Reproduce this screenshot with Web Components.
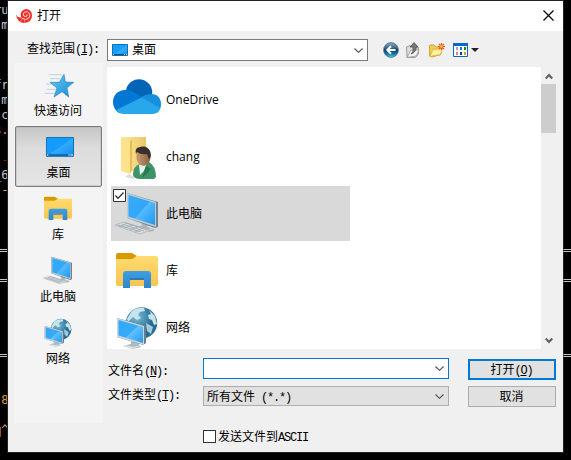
<!DOCTYPE html>
<html lang="zh-CN">
<head>
<meta charset="utf-8">
<title>打开</title>
<style>
html,body{margin:0;width:571px;height:460px;overflow:hidden;background:#000}
</style>
</head>
<body>
<desktop-scene></desktop-scene>
<script>
const UI = '"Open Sans","Noto Sans CJK SC",sans-serif';
const ICONS = {
cloud:`<svg viewBox="0 0 48 48"><path d="M13 15A13 13 0 0 1 39 20L28 25Z" fill="#0364b8"/><path d="M12 15C5 15 0 20 0 27C0 32 3 36 6 38L29 22L20 16.500Q16 14 12 15Z" fill="#0078d4"/><path d="M39 19Q33 19 28 22L44 38Q48 35 48 29C48 23 44 19 39 19Z" fill="#1490df"/><path d="M3 35L28.500 22.500L47 33Q45 39 39 39H11Q6 39 3 35Z" fill="#28a8ea"/></svg>`,
user:`<svg viewBox="0 0 48 48"><defs><linearGradient id="f"><stop stop-color="#ffe9a0"/><stop offset="1" stop-color="#edc765"/></linearGradient><linearGradient id="h"><stop stop-color="#c99c70"/><stop offset="1" stop-color="#87603f"/></linearGradient></defs><path d="M8 5H33V39H14Z" fill="url(#f)"/><path d="M8 5L17 10V42L8 39Z" fill="#ffe28b"/><path d="M17 10V42L19 38V7Z" fill="#e7bd58"/><path d="M16 42L21 45V47L12 45Z" fill="#ddd"/><path d="M20 43Q20 34 27 32L36 30Q43 34 43 45L41 47H27Q21 47 20 43Z" fill="#3d9466"/><path d="M26 33L34 31L31 39L27 43Z" fill="#e3f1ed"/><path d="M33 34L29 46L38 37Z" fill="#277650"/><ellipse cx="30.500" cy="24" rx="7.200" ry="10" fill="url(#h)"/><path d="M23 22Q21 16 27 15Q34 14 37 19Q39 24 36 27L34 22Q28 23 24 20Z" fill="#36302e"/></svg>`,
pc:`<svg viewBox="0 0 48 48"><defs><linearGradient id="p" x2="1" y2="1"><stop stop-color="#38acfa"/><stop offset=".5" stop-color="#32a6f8"/><stop offset=".52" stop-color="#55baff"/><stop offset="1" stop-color="#2097ed"/></linearGradient></defs><path d="M28 32L36 34L34 38L41 40V42L34 43L21 40V38L29 37Z" fill="#a9b4bd"/><path d="M22 38L35 40L41 39L34 43L21 40Z" fill="#d6dce0"/><path d="M14 4L45 13V38L42 39L14 29Z" fill="#71818e"/><path d="M14 4L43 13V38L14 29Z" fill="#bdcbd3"/><path d="M15.500 6L42 14V36L15.500 27.500Z" fill="url(#p)"/><path d="M2 36L11 33L37 41L27 45Z" fill="#dce1e4" stroke="#9ca6ad" stroke-width=".6"/><path d="M5 36L28 43M9 35L31 42M13 34L34 41M6 38L14 34M11 39L20 36M17 41L25 38M22 43L30 39" stroke="#a4afb6" stroke-width="1"/></svg>`,
library:`<svg viewBox="0 0 48 48"><defs><linearGradient id="l" x2="0" y2="1"><stop stop-color="#ffdb70"/><stop offset="1" stop-color="#f8c550"/></linearGradient><linearGradient id="b" x2="0" y2="1"><stop stop-color="#3f9ee5"/><stop offset="1" stop-color="#2f86ca"/></linearGradient></defs><path d="M3 9Q3 7 5 7H19L24 10L20 14H3Z" fill="#d99a00"/><path d="M3 13H19L24 10H43Q45 10 45 12V38Q45 40 43 40H5Q3 40 3 38Z" fill="url(#l)"/><path d="M10 42V28Q10 25 13 25H35Q38 25 38 28V42H31V32H17V42Z" fill="url(#b)"/><path d="M17 32H31V34H17Z" fill="#3279b2"/></svg>`,
network:`<svg viewBox="0 0 48 48"><defs><radialGradient id="g" cx=".35" cy=".3"><stop stop-color="#76bedb"/><stop offset="1" stop-color="#286d91"/></radialGradient><linearGradient id="n" x2="1" y2="1"><stop stop-color="#30a8fb"/><stop offset=".52" stop-color="#37aaf9"/><stop offset=".54" stop-color="#62c0ff"/><stop offset="1" stop-color="#239aef"/></linearGradient></defs><circle cx="28.500" cy="20" r="15.700" fill="url(#g)"/><path d="M19 8Q24 4 31 5L32 8L27 9L25 12L28 15L24 17L20 14L15 19L14 16Z" fill="#c5e4ec"/><path d="M36 7L42 13L44 21L41 22L39 17L36 16L35 12L38 11Z" fill="#c5e4ec"/><path d="M33 20L40 24L38 31L34 28Z" fill="#a1cddd"/><path d="M18 37L26 40V42L28 44L20 46L10 43L18 41Z" fill="#aeb9c0"/><path d="M12 42L20 44L28 42L20 46L10 43Z" fill="#dce1e3"/><path d="M4 15L33 23V40L30 42L4 34Z" fill="#687d8b"/><path d="M4 15L31 23V42L4 34Z" fill="#cbd6dc"/><path d="M5.500 17L30 24V40L5.500 32.500Z" fill="url(#n)"/></svg>`,
star:`<svg viewBox="0 0 48 48"><defs><linearGradient id="s" x2="1" y2="1"><stop stop-color="#65cafc"/><stop offset="1" stop-color="#168bd0"/></linearGradient></defs><path d="M10 10H29M12 16H27M6 24H19M7 32H21M4 38H19" stroke="#a9cbe0" stroke-width="1.200"/><path d="M33 9.500L35 21L47.500 21.500L37.500 29.500L40 43.500L30 35.500L18 43.500L22.500 30L12 21.500H26Z" fill="url(#s)" stroke="#2486bd"/></svg>`,
desktop:`<svg viewBox="0 0 48 48"><defs><linearGradient id="d" x2="1" y2="1"><stop stop-color="#159bfb"/><stop offset=".5" stop-color="#159bfb"/><stop offset=".51" stop-color="#31aaff"/><stop offset="1" stop-color="#128fed"/></linearGradient></defs><path d="M5.200 11.200H45.800V39.500H5.200Z" fill="url(#d)" stroke="#1173b4" stroke-width="1.500"/><path d="M6 37.500H45" stroke="#095692" stroke-width="2"/><path d="M6 37.500H8M38 37.500H40M41 37.500H45" stroke="#fff" stroke-width="1.500"/></svg>`,
minidesk:`<svg viewBox="0 0 16 12"><defs><linearGradient id="m" x2="1" y2="1"><stop offset=".5" stop-color="#179dfb"/><stop offset=".52" stop-color="#38adff"/><stop offset="1" stop-color="#128fed"/></linearGradient></defs><path d="M.5.500H15.500V11.500H.5Z" fill="url(#m)" stroke="#1270ad"/><path d="M1 10.500H15" stroke="#07518b"/><path d="M1 10.500H2M12 10.500H13M14 10.500H15" stroke="#fff"/></svg>`,
shell:`<svg viewBox="0 0 16 14"><path d="M0 5Q1 8.500 5 8.500L16 6Q16 13.500 8.500 14Q1 14 0 5Z" fill="#ed3029"/><circle cx="10.300" cy="5.700" r="5.600" fill="#ed3029"/><path d="M5.500 9.200Q10 12 13 8.800Q15 4.500 11.500 2.800Q8 2 7.200 5Q7.200 7.800 9.800 7.600Q12 7 10.900 5.300" fill="none" stroke="#fff" stroke-width=".8"/><path d="M6 10L4.500 13M8.500 11V14M11.500 10.500L13 12.500" fill="none" stroke="#ff9e99" stroke-width=".6"/></svg>`,
close:`<svg viewBox="0 0 11 11"><path d="M.5.500L10.500 10.500M10.500.5L.5 10.500" stroke="#000" stroke-width="1.150"/></svg>`,
chevron:`<svg viewBox="0 0 9 5"><path d="M.5.500L4.500 4.300L8.500.5" fill="none" stroke="#505050" stroke-width="1.100"/></svg>`,
up:`<svg viewBox="0 0 8 7"><path d="M.7 5.500L4 2L7.300 5.500" fill="none" stroke="#606060" stroke-width="2.200"/></svg>`,
down:`<svg viewBox="0 0 8 7"><path d="M.7 1.500L4 5L7.300 1.500" fill="none" stroke="#606060" stroke-width="2.200"/></svg>`,
back:`<svg viewBox="0 0 16 16"><defs><linearGradient id="k" x2="0" y2="1"><stop stop-color="#8fa8bd"/><stop offset=".35" stop-color="#40698f"/><stop offset=".5" stop-color="#113a66"/><stop offset=".8" stop-color="#1682b5"/><stop offset="1" stop-color="#52dce9"/></linearGradient></defs><circle cx="8" cy="8" r="7.400" fill="url(#k)" stroke="#496f8f" stroke-width=".8"/><path d="M12.500 8H4.500M8 4.300L4.300 8L8 11.700" fill="none" stroke="#fff" stroke-width="2"/></svg>`,
parent:`<svg viewBox="0 0 16 16"><path d="M.5 5L4 3.500L5 4.500H8L11 6L12.500 5.500V12L9.500 15.500H1Z" fill="#ddd" stroke="#9b9b9b"/><path d="M1 15.500L5 8H13L10 14Z" fill="#f4f4f4" stroke="#999" stroke-width=".8"/><path d="M5 12Q8 10 7 5H4L8 .5L12 5H10Q10.500 10 5 12Z" fill="#777" stroke="#4c4c4c" stroke-width=".8"/></svg>`,
newfolder:`<svg viewBox="0 0 16 16"><path d="M.5 4V14L3 15L12 12.500V5H7L5 3H1Z" fill="#f3ce54" stroke="#cfa23b"/><path d="M1 14.500L4 7.500L13.500 6.500L11.500 12.500Z" fill="#fff1a1" stroke="#daad3b" stroke-width=".8"/><path d="M12.500 1V8M9 4.500H16M10 2L15 7M15 2L10 7" stroke="#f05320" stroke-width="1.200"/><circle cx="12.500" cy="4.500" r="1.300" fill="#ffcf4c"/></svg>`,
view:`<svg viewBox="0 0 15 14"><path d="M.5.500H14.500V13.500H.5Z" fill="#fff" stroke="#0866cf"/><path d="M0 0H15V3H0Z" fill="#0866cf"/><path d="M3 4H5V7H3Z" fill="#ad98d8"/><path d="M7 4H9V7H7Z" fill="#167be5"/><path d="M11 4H13V7H11Z" fill="#168a29"/><path d="M3 9H5V12H3Z" fill="#f17f65"/><path d="M7 9H9V12H7Z" fill="#123a91"/><path d="M11 9H13V12H11Z" fill="#d49b1a"/></svg>`,
tri:`<svg viewBox="0 0 8 4"><path d="M0 0H8L4 4Z" fill="#222"/></svg>`,
check:`<svg viewBox="0 0 13 13"><path d="M.5.500H12.500V12.500H.5Z" fill="#fff" stroke="#333"/><path d="M2.500 6.500L5 9.300L10.500 3.500" fill="none" stroke="#222" stroke-width="1.200"/></svg>`
};
function define(name, html){
  customElements.define(name, class extends HTMLElement{
    connectedCallback(){
      if(this.shadowRoot) return;
      const t=document.createElement('template');
      t.innerHTML=typeof html==='function'?html(this):html;
      this.attachShadow({mode:'open'}).append(t.content.cloneNode(true));
    }
  });
}
define('shell-icon', e=>`<style>:host{display:block;flex:none;width:${e.getAttribute('w')}px;height:${e.getAttribute('h')||e.getAttribute('w')}px}svg{display:block;width:100%;height:100%}</style>${ICONS[e.getAttribute('name')]}`);

/* Fixed-pitch latin beside full-width hanzi, half a hanzi per letter. */
define('half-text', `<style>:host{font:12px/12px "Liberation Mono",monospace;letter-spacing:-1.2px;white-space:pre}</style><slot></slot>`);

define('terminal-strip', e=>{
  const rows=JSON.parse(e.getAttribute('rows'));
  let out='';
  for(let i=0;i<30;i++){const r=rows[i];out+=`<div style="${r&&r[1]?'color:'+r[1]:''}${r&&r[0][0]==='='?';letter-spacing:-1.6px':''}">${r?r[0]:''}</div>`}
  return `<style>:host{display:flex;flex-direction:column;flex:none;width:8px;padding-top:3px;box-sizing:border-box;height:460px;overflow:hidden;font:12px/15px "DejaVu Sans Mono",monospace;letter-spacing:-.4px;color:#c4c4c4}div{height:15px;flex:none;display:flex;justify-content:${e.getAttribute('side')};white-space:pre}</style>${out}`;
});

define('title-bar', `<style>:host{display:flex;align-items:center;height:30px;background:#fff;padding:0 9px 0 8px;font:12px/16px ${UI}}span{flex:1;padding-left:5px}.x{position:relative;top:-1px}</style><shell-icon name="shell" w="16" h="14"></shell-icon><span><slot></slot></span><shell-icon class="x" name="close" w="11"></shell-icon>`);

define('drop-box', `<style>:host{display:flex;align-items:center;box-sizing:border-box;height:22px;border:1px solid #7a7a7a;background:#fff;padding:0 4px;font:12px/16px ${UI}}.v{flex:1;display:flex;align-items:center;gap:4px;white-space:pre}
:host([focused]){border-color:#0078d7;height:21px}:host([flat]){background:#e1e1e1;border-color:#adadad;height:20px;padding-left:3px}</style><div class="v"><slot></slot></div><shell-icon name="chevron" w="9" h="5"></shell-icon>`);

define('look-in', `<style>:host{display:flex;height:32px;box-sizing:border-box;padding:8px 0 0 19px}label{width:80px;font:12px/18px "Noto Sans CJK SC",sans-serif;white-space:nowrap}drop-box{width:261px}.t{display:flex;align-items:center;height:22px;margin-left:15px;gap:7px}.view{display:flex;align-items:center;gap:3px;margin-left:1px}</style>
<label>查找范围<half-text>(<u>I</u>):</half-text></label><drop-box><shell-icon name="minidesk" w="16" h="12"></shell-icon>桌面</drop-box>
<div class="t"><shell-icon name="back" w="16"></shell-icon><shell-icon name="parent" w="16"></shell-icon><shell-icon name="newfolder" w="16"></shell-icon><div class="view"><shell-icon name="view" w="15" h="14"></shell-icon><shell-icon name="tri" w="8" h="4"></shell-icon></div></div>`);

define('place-item', e=>`<style>:host{display:flex;flex-direction:column;align-items:center;box-sizing:border-box;width:87px;height:61px;margin:0 1px 1px;padding:4px 1px 0 0;font:12px/16px ${UI}}
:host([selected]){background:linear-gradient(#c6c6c6,#dcdcdc 35%,#e5e5e5);border:1px solid #7c7c7c;box-shadow:inset 0 0 0 1px #a9a9a955;border-radius:2px;padding:3px 0 0}span{margin-top:3px}</style><shell-icon name="${e.getAttribute('icon')}" w="32"></shell-icon><span><slot></slot></span>`);

define('places-bar', `<style>:host{display:block;box-sizing:border-box;width:89px;height:360px;padding-top:1px;background:#f4f4f4;flex:none}</style>
<place-item icon="star">快速访问</place-item><place-item icon="desktop" selected>桌面</place-item><place-item icon="library">库</place-item><place-item icon="pc">此电脑</place-item><place-item icon="network">网络</place-item>`);

define('file-item', e=>`<style>:host{display:flex;flex:none;align-items:center;position:relative;box-sizing:border-box;width:239px;height:55px;padding-left:2px;gap:5px;font:12px/16px ${UI}}:host([selected]){background:#d9d9d9}.c{position:absolute;left:2px;top:3px}.i{align-self:flex-start;margin-top:3px}</style><shell-icon class="i" name="${e.getAttribute('icon')}" w="48"></shell-icon><span><slot></slot></span>${e.hasAttribute('selected')?'<shell-icon class="c" name="check" w="13"></shell-icon>':''}`);

define('scroll-bar', `<style>:host{display:flex;flex-direction:column;align-items:center;width:15px;background:#f0f0f0;box-sizing:border-box;padding:6px 0 5px}i{width:15px;height:49px;background:#cdcdcd;margin:4px 0 auto}</style><shell-icon name="up" w="8" h="7"></shell-icon><i></i><shell-icon name="down" w="8" h="7"></shell-icon>`);

define('file-list', `<style>:host{display:flex;height:282px;background:#fff}.l{flex:1;display:flex;flex-direction:column;gap:2px;padding:5px 4px 0;overflow:hidden}</style>
<div class="l"><file-item icon="cloud">OneDrive</file-item><file-item icon="user">chang</file-item><file-item icon="pc" selected>此电脑</file-item><file-item icon="library">库</file-item><file-item icon="network">网络</file-item></div><scroll-bar></scroll-bar>`);

define('push-button', `<style>:host{display:flex;align-items:center;justify-content:center;box-sizing:border-box;width:88px;height:21px;border:1px solid #adadad;background:#e1e1e1;font:12px/16px "Noto Sans CJK SC",sans-serif;white-space:nowrap}:host([default]){border:2px solid #0078d7}span{margin:0 1px 1px 0}</style><span><slot></slot></span>`);

define('file-form', `<style>:host{display:grid;grid-template-columns:95px 246px 88px;grid-template-rows:21px 21px;row-gap:7px;margin:9px 0 0 1px;font:12px/18px "Noto Sans CJK SC",sans-serif}push-button{margin-left:19px}.b1{margin-top:1px}label{white-space:nowrap;margin-top:3px}.two{margin-top:0}.chk{grid-column:2/4;display:flex;align-items:center;gap:2px;height:14px;margin-top:15px;white-space:nowrap}.chk i{width:13px;height:13px;box-sizing:border-box;border:1px solid #333;background:#fff}.s{white-space:pre;font:12px/18px "Noto Sans CJK SC"}.two{position:relative;top:-1px}</style>
<label>文件名<half-text>(<u>N</u>):</half-text></label><drop-box focused></drop-box><push-button class="b1" default>打开<half-text>(<u>O</u>)</half-text></push-button>
<label class="two">文件类型<half-text>(<u>T</u>):</half-text></label><drop-box flat><span class="s">所有文件<half-text> (*.*)</half-text></span></drop-box><push-button>取消</push-button>
<div class="chk"><i></i><span>发送文件到<half-text>ASCII</half-text></span></div>`);

define('open-dialog', `<style>:host{display:block;flex:none;width:555px;height:451px;margin-top:1px;background:#f0f0f0;color:#000;outline:1px solid #222;overflow:hidden}.b{display:flex;padding-left:6px}.m{width:449px;padding:4px 0 0 4px}</style>
<title-bar>打开</title-bar><look-in></look-in><div class="b"><places-bar></places-bar><div class="m"><file-list></file-list><file-form></file-form></div></div>`);

const left={0:['ru'],1:['m'],5:['fr'],6:['m'],7:['c'],8:['s.','#d0a06c'],10:['-','#8a1208'],11:['_6'],12:['-','#e0a860'],16:['=='],18:['=='],23:['=='],26:['8','#dc9a48'],28:['q^','#c9a36e']};
const right={16:['=='],18:['=='],23:['==']};
define('desktop-scene', `<style>:host{display:flex;width:571px;height:460px;background:#000;overflow:hidden}</style><terminal-strip side="flex-end" rows='${JSON.stringify(left)}'></terminal-strip><open-dialog></open-dialog><terminal-strip side="flex-start" rows='${JSON.stringify(right)}'></terminal-strip>`);
</script>
</body>
</html>
